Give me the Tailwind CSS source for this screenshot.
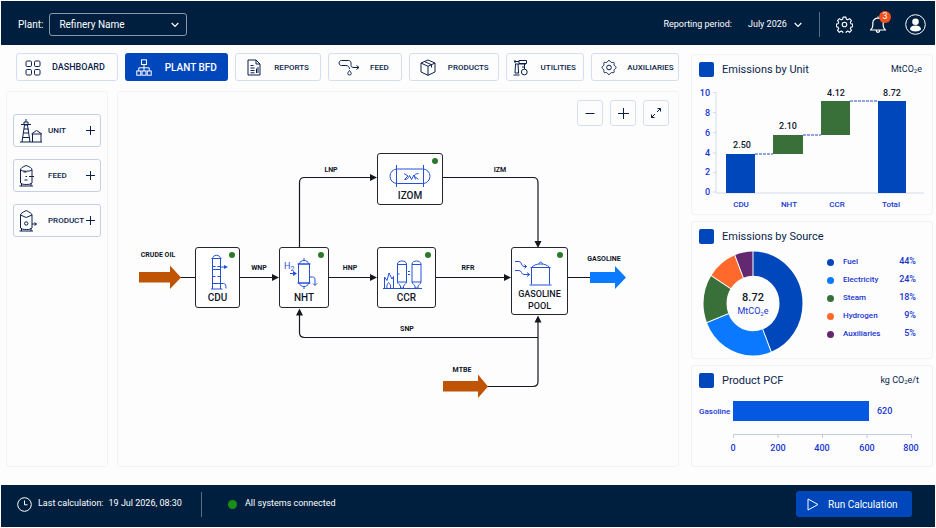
<!DOCTYPE html>
<html lang="en">
<head>
    <meta charset="utf-8">
    <meta name="viewport" content="width=device-width, initial-scale=1">
    <title>Plant BFD - Refinery Name</title>
    <script src="https://cdn.jsdelivr.net/npm/@tailwindcss/browser@4"></script>
</head>
<body class="min-h-screen bg-[#fdfdfe] p-px font-['Roboto',sans-serif] text-[#0b1f4b]">
<div class="flex min-h-[calc(100vh-2px)] flex-col">

    <!-- top bar -->
    <header class="flex h-11 items-center justify-between bg-[#001f3f] pl-[17px] pr-[9px] pt-[3px] text-white">
        <div class="flex items-center gap-[6px]">
            <label for="plant" class="text-[10px]">Plant:</label>
            <div class="relative flex items-center">
                <select id="plant" class="h-[23px] w-[138px] appearance-none rounded-[3px] border border-[#8a97a8] bg-transparent pl-[9px] text-[10px]">
                    <option>Refinery Name</option>
                </select>
                <svg class="pointer-events-none absolute right-2 h-2 w-2" viewBox="0 0 8 8" fill="none" stroke="currentColor" stroke-width="1.2"><path d="M.7 2 4 5.4 7.3 2"/></svg>
            </div>
        </div>
        <div class="flex items-center">
            <label for="period" class="text-[9px]">Reporting period:</label>
            <div class="relative ml-4 flex items-center">
                <select id="period" class="h-5 w-[54px] appearance-none bg-transparent text-[9px]">
                    <option>July 2026</option>
                </select>
                <svg class="pointer-events-none absolute right-0 h-2 w-2" viewBox="0 0 8 8" fill="none" stroke="currentColor" stroke-width="1.2"><path d="M.7 2 4 5.4 7.3 2"/></svg>
            </div>
            <div class="ml-[17px] h-[25px] w-px bg-[#5b6c83]"></div>
            <button type="button" aria-label="Settings" class="ml-4">
                <svg class="h-[17px] w-[17px]" viewBox="0 0 24 24" fill="none" stroke="currentColor" stroke-width="1.6" stroke-linejoin="round"><circle cx="12" cy="12" r="3.2"/><path d="M10 1.5h4l.6 3 2 .9 2.6-1.7 2.6 2.7-1.6 2.6.9 2 2.4.5v3.6l-2.4.6-.9 2 1.6 2.6-2.6 2.7-2.6-1.7-2 .9-.6 2.8h-4l-.6-2.8-2-.9-2.6 1.7-2.6-2.7 1.6-2.6-.9-2-2.4-.6v-3.6l2.4-.5.9-2-1.6-2.6 2.6-2.7 2.6 1.7 2-.9z"/></svg>
            </button>
            <button type="button" aria-label="Notifications" class="relative ml-4">
                <svg class="h-[19px] w-[18px]" viewBox="0 0 18 19" fill="none" stroke="currentColor" stroke-width="1.2" stroke-linejoin="round"><path d="M1.5 15h15c-1.5-1.3-2.3-2.6-2.3-4.5V8c0-2.9-2.2-4.8-5.2-4.8S3.8 5.1 3.8 8v2.5c0 1.9-.8 3.2-2.3 4.5zM9 3V1.6M7.3 15.3c0 1.3.6 2 1.7 2s1.7-.7 1.7-2"/></svg>
                <span class="absolute -right-1 -top-1 flex h-3 w-3 items-center justify-center rounded-full bg-[#f4511e] text-[9px]">3</span>
            </button>
            <button type="button" aria-label="Account" class="ml-[18px]">
                <svg class="h-[21px] w-[21px]" viewBox="0 0 21 21"><circle cx="10.5" cy="10.5" r="9.8" fill="none" stroke="currentColor"/><circle cx="10.5" cy="7.8" r="3.3" fill="currentColor"/><path d="M5 15.5c0-2.6 2-3.9 5.5-3.9s5.5 1.3 5.5 3.9c-1 1.3-3 2-5.5 2s-4.5-.7-5.5-2z" fill="currentColor"/></svg>
            </button>
        </div>
    </header>

    <main class="grid flex-1 grid-cols-[minmax(0,1fr)_242px] gap-x-3 pb-[18px] pl-[5px] pr-[2px] pt-2">
        <div class="flex flex-col gap-[10px]">

            <nav class="grid grid-cols-[102fr_104fr_86fr_74fr_90fr_79fr_88fr] gap-[7px] pl-[10px] text-[8px] font-medium">
                <a href="#" class="flex h-7 items-center gap-[11px] rounded-[3px] border border-[#d5deef] pl-2 pt-px text-[9px]">
                    <svg class="h-4 w-4" viewBox="0 0 16 16" fill="none" stroke="currentColor"><rect x="1" y="1" width="5.5" height="5.5" rx="1.2"/><rect x="9.5" y="1" width="5.5" height="5.5" rx="1.2"/><rect x="1" y="9.5" width="5.5" height="5.5" rx="1.2"/><rect x="9.5" y="9.5" width="5.5" height="5.5" rx="1.2"/></svg>
                    DASHBOARD
                </a>
                <a href="#" aria-current="page" class="flex h-7 items-center gap-[13px] rounded-[3px] bg-[#0047bb] pl-[11px] pt-px text-[10px] text-white">
                    <svg class="h-[17px] w-4" viewBox="0 0 16 17" fill="none" stroke="currentColor"><rect x="5.5" y=".8" width="5" height="4.7"/><rect x=".8" y="12" width="4" height="4.2"/><rect x="6" y="12" width="4" height="4.2"/><rect x="11.2" y="12" width="4" height="4.2"/><path d="M8 5.5V12M2.8 12V8.8h10.4V12"/></svg>
                    PLANT BFD
                </a>
                <a href="#" class="flex h-7 items-center gap-[13px] rounded-[3px] border border-[#d5deef] pl-[11px] pt-px">
                    <svg class="h-[17px] w-[14px]" viewBox="0 0 14 17" fill="none" stroke="currentColor"><path d="M1 1h8l4 4v11H1zM9 1v4h4M3.5 6.500h3M3.500 9h4M3.500 11.500h4M3.500 13.800h4M9.500 14V9.500M11 14V8"/></svg>
                    REPORTS
                </a>
                <a href="#" class="flex h-7 items-center gap-[10px] rounded-[3px] border border-[#d5deef] pl-[9px] pt-px">
                    <svg class="h-[17px] w-[22px]" viewBox="0 0 22 17" fill="none" stroke="currentColor"><path d="M8 6.5H3.500C.3 6.500.3 1.500 3.500 1.500h7c3 0 2.500 3 2.500 5 0 1.500 1.500 2 3 2h4.500M18.500 6.500l2.500 2-2.500 2M8 6.500c2 0 3.500 1.500 3.500 3.500M11.500 11.500c-1.200 1.600-1.700 2.300-1.700 3a1.700 1.500 0 0 0 3.400 0c0-.7-.5-1.400-1.700-3z"/></svg>
                    FEED
                </a>
                <a href="#" class="flex h-7 items-center gap-3 rounded-[3px] border border-[#d5deef] pl-[10px] pt-px">
                    <svg class="h-[17px] w-4" viewBox="0 0 16 17" fill="none" stroke="currentColor" stroke-linejoin="round"><path d="M8 1 15 4v9l-7 3.300L1 13V4zM1 4l7 3.300L15 4M8 7.300v9M4.500 2.500l7 3.300v2.700"/></svg>
                    PRODUCTS
                </a>
                <a href="#" class="flex h-7 items-center gap-[13px] rounded-[3px] border border-[#d5deef] pl-[6px] pt-px">
                    <svg class="h-[17px] w-[15px]" viewBox="0 0 15 17" fill="none" stroke="currentColor"><path d="M1 2.500h5M2 1v3M2 5h11M6 1.500h7.500v3H6zM2.500 5 2 14M5 5l.6 9M2 14h4M.5 16h6M11.500 5v5M9 8h3"/><circle cx="11.3" cy="13" r="2.9"/></svg>
                    UTILITIES
                </a>
                <a href="#" class="flex h-7 items-center gap-[10px] rounded-[3px] border border-[#d5deef] pl-[9px] pt-px">
                    <svg class="h-[17px] w-4 shrink-0" viewBox="0 0 24 24" fill="none" stroke="currentColor" stroke-width="1.5" stroke-linejoin="round"><circle cx="12" cy="12" r="3.5"/><path d="M12 1.500c2 0 2 2.300 3.500 2.900S18.500 3.600 19.500 4.600s-.4 2.500.2 4 2.900 1.500 2.900 3.400-2.300 2-2.900 3.500.8 2.900-.2 3.900-2.500-.4-4 .2-1.500 2.900-3.500 2.900-2-2.300-3.500-2.900-3 .8-4-.2.4-2.400-.2-3.900-2.900-1.600-2.900-3.500 2.300-1.900 2.900-3.400-.8-3 .2-4 2.500.4 4-.2S10 1.500 12 1.500z"/></svg>
                    AUXILIARIES
                </a>
            </nav>

            <div class="grid flex-1 grid-cols-[102px_minmax(0,1fr)] gap-[9px]">

                <!-- palette -->
                <aside class="flex flex-col gap-3 rounded-[3px] border border-[#f1f3f7] px-[6px] pt-[22px] text-[8px] font-medium">
                    <button type="button" class="flex h-[33px] items-center rounded-[3px] border border-[#c3d0e8] pl-[5px] pr-1">
                        <svg class="h-6 w-6 shrink-0" viewBox="0 0 24 24" fill="none" stroke="currentColor"><path d="M3 23 5.500 6h3L11 23M2 5.500h10M5 5V3h4v2M7 3V0M5 10h4.500M4.500 14h5M4 18.500h6M1 23h22M13.500 23v-8h8.500v8M12.500 15l5-3.500 5.500 3.500"/></svg>
                        <span class="ml-[5px]">UNIT</span>
                        <svg class="ml-auto h-[11px] w-[11px] shrink-0" viewBox="0 0 11 11" stroke="currentColor"><path d="M5.500 1v9M1 5.500h9"/></svg>
                    </button>
                    <button type="button" class="flex h-[33px] items-center rounded-[3px] border border-[#c3d0e8] pl-[5px] pr-1">
                        <svg class="h-6 w-6 shrink-0" viewBox="0 0 24 24" fill="none" stroke="currentColor"><path d="M1.500 6v13M13 6v13M1.500 6c0-2 2-3 5.700-4.500C11 3 13 4 13 6c-2 1.700-9.500 1.700-11.500 0zM.5 22H14M1.500 19c1 2 10.500 2 11.500 0M2.500 22v-3M12 22v-3M4.500 8h3M6.500 12.500H8M10 12.500h5M5.500 16h3"/></svg>
                        <span class="ml-[5px]">FEED</span>
                        <svg class="ml-auto h-[11px] w-[11px] shrink-0" viewBox="0 0 11 11" stroke="currentColor"><path d="M5.500 1v9M1 5.500h9"/></svg>
                    </button>
                    <button type="button" class="flex h-[33px] items-center rounded-[3px] border border-[#c3d0e8] pl-[5px] pr-1">
                        <svg class="h-6 w-6 shrink-0" viewBox="0 0 24 24" fill="none" stroke="currentColor"><path d="M1.500 6v13M13 6v13M1.500 6c0-1.500 2-2.500 5.700-4.500C11 3.500 13 4.500 13 6L7.200 8.500zM.5 22H14M1.500 19c1 2 10.500 2 11.500 0M2.500 22v-3M12 22v-3M13 15h4.500M15.500 13.500l2 1.500-2 1.500"/><circle cx="7.2" cy="14.5" r="1.7"/></svg>
                        <span class="ml-[5px]">PRODUCT</span>
                        <svg class="ml-auto h-[11px] w-[11px] shrink-0" viewBox="0 0 11 11" stroke="currentColor"><path d="M5.500 1v9M1 5.500h9"/></svg>
                    </button>
                </aside>

                <!-- flow diagram -->
                <section class="relative rounded-[3px] border border-[#f1f3f7]">
                    <div class="absolute right-[9px] top-2 z-10 flex gap-[7px]">
                        <button type="button" aria-label="Zoom out" class="flex h-[26px] w-[26px] items-center justify-center rounded-[3px] border border-[#d8dfec]">
                            <svg class="h-3 w-3" viewBox="0 0 12 12" stroke="currentColor"><path d="M1.500 6.500h9"/></svg>
                        </button>
                        <button type="button" aria-label="Zoom in" class="flex h-[26px] w-[26px] items-center justify-center rounded-[3px] border border-[#d8dfec]">
                            <svg class="h-3 w-3" viewBox="0 0 12 12" stroke="currentColor"><path d="M6.500 1v11M1 6.500h11"/></svg>
                        </button>
                        <button type="button" aria-label="Full screen" class="flex h-[26px] w-[26px] items-center justify-center rounded-[3px] border border-[#d8dfec]">
                            <svg class="h-3 w-3" viewBox="0 0 12 12" fill="none" stroke="currentColor"><path d="M7 5l3.500-3.500M7.500 1.500h3v3M5 7l-3.500 3.500M1.500 7.500v3h3"/></svg>
                        </button>
                    </div>

                    <div class="relative mx-auto h-[373px] w-[560px] text-[#101828]">
                        <svg class="absolute inset-0 h-full w-full" viewBox="0 0 560 373" fill="none">
                            <g stroke="#14181f" stroke-width="1.2">
                                <path d="M62 185.500h15M122 185.500h34M211 185.500h43M318 185.500h70M450 185.500h22"/>
                                <path d="M181.500 156V90.500q0-5 5-5H254M325 85.500h90q5 0 5 5V150"/>
                                <path d="M420 245.500H186.500q-5 0-5-5V222M369 294.500h46q5 0 5-5V229"/>
                            </g>
                            <g fill="#14181f">
                                <path d="M161 185.500l-7-3.500v7zM259 185.500l-7-3.500v7zM393 185.500l-7-3.500v7zM259 85.500l-7-3.500v7z"/>
                                <path d="M420 156l-3.500-7h7zM181.500 216.500l-3.500 7h7zM420 223.500l-3.500 7h7z"/>
                            </g>
                            <path fill="#c05405" d="M21 180h31v-6.500l11 12-11 11.500v-6.500H21zM325 289h35v-6.500l10 12-10 11.500v-6.500h-35z"/>
                            <path fill="#0a7bff" d="M472 180h25v-6l11 11.500-11 11.500v-6h-25z"/>
                            <g class="text-[7px] font-bold" fill="#101828" text-anchor="middle">
                                <text x="40" y="165">CRUDE OIL</text>
                                <text x="141" y="178">WNP</text>
                                <text x="232" y="178">HNP</text>
                                <text x="213" y="80">LNP</text>
                                <text x="382" y="80">IZM</text>
                                <text x="350" y="178">RFR</text>
                                <text x="289" y="239">SNP</text>
                                <text x="344" y="280">MTBE</text>
                                <text x="486" y="169">GASOLINE</text>
                            </g>
                        </svg>

                        <div class="absolute left-[77px] top-[155px] flex h-[61px] w-[45px] flex-col items-center rounded-[3px] border border-[#23272f] bg-white pt-[6px]">
                            <span class="absolute right-1 top-1 h-[6px] w-[6px] rounded-full bg-[#2a7a2a]"></span>
                            <svg class="h-[36px] w-[22px]" viewBox="0 0 22 36" fill="none" stroke="#2450d8"><path d="M5.500 35V5c0-5 8-5 8 0v30M4 35h11.500M4.500 4.500h10M5.500 12.500h3M10.500 12.500h3M5.500 15.500h8M5.500 22.500h3M10.500 22.500h3M5.500 29.500h8M13.500 13H18M13.500 29.500h3c2 0 2.500 2 2.500 5"/><path d="M17 11l4 2-4 2z" fill="#2450d8" stroke="none"/></svg>
                            <span class="text-[10px] leading-4 font-medium">CDU</span>
                        </div>

                        <div class="absolute left-[161px] top-[155px] flex h-[61px] w-[50px] flex-col items-center rounded-[3px] border border-[#23272f] bg-white pt-[9px]">
                            <span class="absolute right-1 top-1 h-[6px] w-[6px] rounded-full bg-[#2a7a2a]"></span>
                            <svg class="h-[33px] w-[40px]" viewBox="0 0 40 33" fill="none" stroke="#2450d8"><rect x="14.5" y="7" width="11" height="19"/><path d="M13.500 7h13M13.500 26h13M15 7c1-2.500 3-3.500 5-3.500s4 1 5 3.500M20 3.500V1M15 26c1 2.500 3 3.500 5 3.500s4-1 5-3.500M20 29.500V32M26 20h2.500c2 0 2.500 1 2.500 3v5M29 26.500l2 2 2-2M6 16.500h4"/><path d="M9 14l4 2.500-4 2.500z" fill="#2450d8" stroke="none"/><text x="0" y="12" class="text-[9px]" fill="#2450d8" stroke="none">H<tspan class="text-[7px]" dy="2">2</tspan></text></svg>
                            <span class="text-[10px] leading-4 font-medium">NHT</span>
                        </div>

                        <div class="absolute left-[259px] top-[61px] flex h-[52px] w-[66px] flex-col items-center rounded-[3px] border border-[#23272f] bg-white pt-[11px]">
                            <span class="absolute right-1 top-1 h-[6px] w-[6px] rounded-full bg-[#2a7a2a]"></span>
                            <svg class="h-[23px] w-[42px]" viewBox="0 0 42 23" fill="none" stroke="#2450d8"><rect x="1" y="4" width="40" height="14.5" rx="7.2"/><path d="M7.500 0v22M34.500 0v22M15 8.500l4 2.500-3.500 3.500c2.500 0 4-1 5-4l2 4 2.500-4.500 1.500 4.500M29.500 8.500C27 8.500 25 10 25 11l4.500 3.500"/></svg>
                            <span class="text-[10px] leading-4 font-medium">IZOM</span>
                        </div>

                        <div class="absolute left-[259px] top-[155px] flex h-[61px] w-[59px] flex-col items-center rounded-[3px] border border-[#23272f] bg-white pt-3">
                            <span class="absolute right-1 top-1 h-[6px] w-[6px] rounded-full bg-[#2a7a2a]"></span>
                            <svg class="mr-2 h-[30px] w-[40px]" viewBox="0 0 40 30" fill="none" stroke="#2450d8"><path d="M0 28.500h39M14.500 4v18c0 2 3 3 3 4v2h3v-2c0-1 3-2 3-4V4c0-4-9-4-9 0zM29 4v18c0 2 3 3 3 4v2h3v-2c0-1 3-2 3-4V4c0-4-9-4-9 0zM14.500 4.500h9M29 4.500h9M14.500 22h9M29 22h9M25 11.500h2M25 14.500h2M14.500 14h2M1.500 28V17l2.500 3.500 2-7.500 3 6 1.500-2.500V28M4 28c-.5-3 .5-4 1.500-5.500C7 24 8 25 7.500 28"/></svg>
                            <span class="text-[10px] leading-4 font-medium">CCR</span>
                        </div>

                        <div class="absolute left-[393px] top-[155px] flex h-[68px] w-[57px] flex-col items-center rounded-[3px] border border-[#23272f] bg-white pt-3">
                            <span class="absolute right-1 top-1 h-[6px] w-[6px] rounded-full bg-[#2a7a2a]"></span>
                            <svg class="mr-3 h-[28px] w-[40px]" viewBox="0 0 40 28" fill="none" stroke="#2450d8"><path d="M1 1.500h4c3 0 2 5 5 5h3M10.500 4.500l2 2-2 2M1 10.500h4c3 0 2 4 5 4h6M13 12.500l2.500 2-2.500 2M17.500 7.500V24.500M35.500 7.500V24.500M15.500 25h22M16.500 7.500h20M17.500 7.500C20 5 22 4 26.500 4s6.500 1 9 3.500M25 4c0-2.500 3.500-2.500 3.500 0"/></svg>
                            <span class="text-center text-[9px] leading-3 font-medium">GASOLINE<br>POOL</span>
                        </div>
                    </div>
                </section>
            </div>
        </div>

        <!-- charts -->
        <div class="flex flex-col gap-[6px] pt-px">
            <section class="rounded-[3px] border border-[#f1f3f7] pb-px">
                <div class="flex h-[29px] items-center pl-[7px] pr-[10px]">
                    <span class="h-[15px] w-[15px] rounded-[2px] bg-[#0047bb]"></span>
                    <h2 class="ml-2 pt-[2px] text-[11px]">Emissions by Unit</h2>
                    <span class="ml-auto text-[9px]">MtCO<sub class="text-[6px]">2</sub>e</span>
                </div>
                <svg class="block w-full" viewBox="0 0 240 129" fill="none">
                    <path d="M24 8v101h208M21 8.500h3M21 28.500h3M21 48.500h3M21 69h3M21 88.500h3M21 108h3" stroke="#d5dbe8"/>
                    <path fill="#0047bb" d="M34 70h29v39H34zM186 17h28v92h-28z"/>
                    <path fill="#39703a" d="M81 51h30v19H81zM129 17h29v34h-29z"/>
                    <path d="M63 70h18M111 51h18M158 17h28" stroke="#2748d0" stroke-dasharray="3 1"/>
                    <g class="text-[9px] font-medium" fill="#1735d0" text-anchor="end">
                        <text x="18" y="12">10</text>
                        <text x="18" y="32">8</text>
                        <text x="18" y="52">6</text>
                        <text x="18" y="72">4</text>
                        <text x="18" y="91">2</text>
                        <text x="18" y="111">0</text>
                    </g>
                    <g class="text-[8px] font-medium" fill="#1735d0" text-anchor="middle">
                        <text x="49" y="123">CDU</text>
                        <text x="97" y="123">NHT</text>
                        <text x="145" y="123">CCR</text>
                        <text x="199" y="123">Total</text>
                    </g>
                    <g class="text-[9px] font-medium" fill="#101828" text-anchor="middle">
                        <text x="50" y="64">2.50</text>
                        <text x="96" y="45">2.10</text>
                        <text x="144" y="12">4.12</text>
                        <text x="200" y="12">8.72</text>
                    </g>
                </svg>
            </section>

            <section class="rounded-[3px] border border-[#f1f3f7] pb-px">
                <div class="flex h-[28px] items-center pl-[7px] pr-[10px]">
                    <span class="h-[15px] w-[15px] rounded-[2px] bg-[#0047bb]"></span>
                    <h2 class="ml-2 pt-[2px] text-[11px]">Emissions by Source</h2>
                </div>
                <div class="flex items-start pl-[10px] pr-4">
                    <svg class="h-[107px] w-[102px] shrink-0" viewBox="0 0 102 107">
                        <g transform="translate(51 53.5) scale(1 1.05) rotate(-90)" fill="none" stroke-width="23">
                            <circle r="38" pathLength="100" stroke="#0047bb" stroke-dasharray="44 56"/>
                            <circle r="38" pathLength="100" stroke="#0a78ff" stroke-dasharray="25 75" stroke-dashoffset="-44"/>
                            <circle r="38" pathLength="100" stroke="#39703a" stroke-dasharray="15 85" stroke-dashoffset="-69"/>
                            <circle r="38" pathLength="100" stroke="#ff6a2c" stroke-dasharray="10 90" stroke-dashoffset="-84"/>
                            <circle r="38" pathLength="100" stroke="#63286f" stroke-dasharray="6 94" stroke-dashoffset="-94"/>
                            <g stroke="#fff" stroke-width="1">
                                <path d="M26 0h24"/>
                                <path d="M26 0h24" transform="rotate(158.4)"/>
                                <path d="M26 0h24" transform="rotate(248.4)"/>
                                <path d="M26 0h24" transform="rotate(302.4)"/>
                                <path d="M26 0h24" transform="rotate(338.4)"/>
                            </g>
                        </g>
                        <text x="51" y="51" text-anchor="middle" class="text-[11px] font-medium" fill="#101828">8.72</text>
                        <text x="51" y="64" text-anchor="middle" class="text-[9px]" fill="#1735d0">MtCO<tspan class="text-[6px]" dy="2">2</tspan><tspan dy="-2">e</tspan></text>
                    </svg>
                    <ul class="ml-[23px] flex-1 pt-[3px] text-[8px] font-medium text-[#1735d0]">
                        <li class="flex h-[18px] items-center"><span class="mr-[9px] h-[7px] w-[7px] rounded-full bg-[#0047bb]"></span>Fuel<b class="ml-auto text-[9px] font-medium">44%</b></li>
                        <li class="flex h-[18px] items-center"><span class="mr-[9px] h-[7px] w-[7px] rounded-full bg-[#0a78ff]"></span>Electricity<b class="ml-auto text-[9px] font-medium">24%</b></li>
                        <li class="flex h-[18px] items-center"><span class="mr-[9px] h-[7px] w-[7px] rounded-full bg-[#39703a]"></span>Steam<b class="ml-auto text-[9px] font-medium">18%</b></li>
                        <li class="flex h-[18px] items-center"><span class="mr-[9px] h-[7px] w-[7px] rounded-full bg-[#ff6a2c]"></span>Hydrogen<b class="ml-auto text-[9px] font-medium">9%</b></li>
                        <li class="flex h-[18px] items-center"><span class="mr-[9px] h-[7px] w-[7px] rounded-full bg-[#63286f]"></span>Auxiliaries<b class="ml-auto text-[9px] font-medium">5%</b></li>
                    </ul>
                </div>
            </section>

            <section class="rounded-[3px] border border-[#f1f3f7]">
                <div class="flex h-[29px] items-center pl-[7px] pr-[13px]">
                    <span class="h-[15px] w-[15px] rounded-[2px] bg-[#0047bb]"></span>
                    <h2 class="ml-2 pt-[2px] text-[11px]">Product PCF</h2>
                    <span class="ml-auto text-[9px]">kg CO<sub class="text-[6px]">2</sub>e/t</span>
                </div>
                <svg class="block w-full" viewBox="0 0 240 71" fill="none">
                    <path fill="#0558e2" d="M41 6h136v20H41z"/>
                    <path d="M41.500 43v-3.500h178V43M86 39.500V43M130.500 39.500V43M175 39.500V43" stroke="#c3cbe0"/>
                    <g class="text-[9px] font-medium" fill="#1735d0">
                        <text x="7" y="19" class="text-[8px]">Gasoline</text>
                        <text x="185" y="19">620</text>
                        <g text-anchor="middle">
                            <text x="41" y="56">0</text>
                            <text x="86" y="56">200</text>
                            <text x="130" y="56">400</text>
                            <text x="175" y="56">600</text>
                            <text x="219" y="56">800</text>
                        </g>
                    </g>
                </svg>
            </section>
        </div>
    </main>

    <footer class="flex h-[42px] items-center bg-[#001f3f] pl-4 pr-[23px] pb-1 text-[9px] text-white">
        <div class="flex min-w-[184px] items-center">
            <svg class="h-[15px] w-[15px]" viewBox="0 0 15 15" fill="none" stroke="currentColor"><circle cx="7.5" cy="7.5" r="6.8"/><path d="M7.500 3.500v4.300h3"/></svg>
            <span class="ml-[6px]">Last calculation:</span>
            <time class="ml-[5px]" datetime="2026-07-19T08:30">19 Jul 2026, 08:30</time>
        </div>
        <div class="h-[25px] w-px bg-[#5b6c83]"></div>
        <span class="ml-[26px] h-[9px] w-[9px] rounded-full bg-[#189018]"></span>
        <span class="ml-2">All systems connected</span>
        <button type="button" class="ml-auto flex h-[26px] w-[116px] items-center gap-[9px] rounded-[3px] bg-[#0047bb] pl-[11px] text-[10px]">
            <svg class="h-[13px] w-3" viewBox="0 0 12 13" fill="none" stroke="currentColor" stroke-linejoin="round"><path d="M1 1l10 5.500L1 12z"/></svg>
            Run Calculation
        </button>
    </footer>
</div>
</body>
</html>
